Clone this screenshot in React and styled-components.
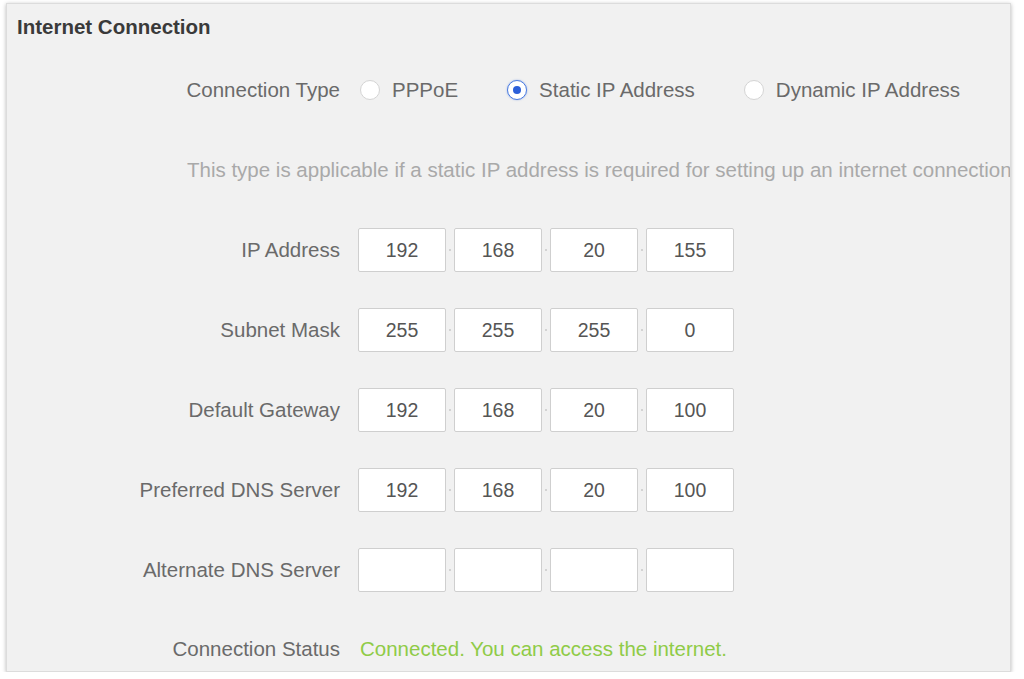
import React from 'react';
import styled, { createGlobalStyle } from 'styled-components';

const GlobalStyle = createGlobalStyle`
  html, body {
    margin: 0;
    padding: 0;
    background: #ffffff;
  }
  body {
    font-family: "Liberation Sans", Arial, sans-serif;
  }
`;

const Panel = styled.div`
  box-sizing: border-box;
  width: 1005px;
  height: 669px;
  margin: 3px 0 0 6px;
  background: #f1f1f1;
  border: 1px solid #dcdcdc;
  box-shadow: 0 1px 4px rgba(0, 0, 0, 0.28);
  overflow: hidden;
  display: flex;
  flex-direction: column;
`;

const Title = styled.div`
  flex-shrink: 0;
  height: 46px;
  display: flex;
  align-items: center;
  padding-left: 10px;
  font-size: 20.5px;
  font-weight: bold;
  color: #3a3a3a;
`;

const Row = styled.div`
  height: ${p => p.h || 80}px;
  flex-shrink: 0;
  display: grid;
  grid-template-columns: 333px auto;
  column-gap: ${p => p.gap ?? 18}px;
  align-items: center;
  white-space: nowrap;
`;

const HintRow = styled.div`
  height: 80px;
  flex-shrink: 0;
  display: flex;
  align-items: center;
  padding-left: 180px;
  white-space: nowrap;
  font-size: 20.5px;
  color: #a9a9a9;
`;

const Label = styled.div`
  text-align: right;
  font-size: 20.5px;
  color: #6a6a6a;
`;

const RadioGroup = styled.div`
  display: flex;
  align-items: center;
  gap: 49px;
`;

const RadioOption = styled.label`
  display: flex;
  align-items: center;
  gap: 12px;
  font-size: 20.5px;
  color: #6a6a6a;
`;

const RadioMark = styled.span`
  box-sizing: border-box;
  width: 20px;
  height: 20px;
  border-radius: 50%;
  background: #fff;
  border: 1px solid ${p => (p.checked ? '#4a7be0' : '#d4d4d4')};
  box-shadow: ${p => (p.checked ? '0 0 2px rgba(60,110,220,0.5)' : 'none')};
  display: flex;
  align-items: center;
  justify-content: center;

  &::after {
    content: '';
    width: 8px;
    height: 8px;
    border-radius: 50%;
    background: #2b5fd9;
    display: ${p => (p.checked ? 'block' : 'none')};
  }
`;

const IpFields = styled.div`
  display: flex;
  align-items: center;
`;

const Octet = styled.div`
  box-sizing: border-box;
  width: 88px;
  height: 44px;
  background: #fff;
  border: 1px solid #cfcfcf;
  border-radius: 2px;
  display: flex;
  align-items: center;
  justify-content: center;
  font-size: 19.5px;
  color: #555;
`;

const Dot = styled.span`
  width: 8px;
  display: flex;
  justify-content: center;

  &::before {
    content: '';
    width: 2px;
    height: 2px;
    border-radius: 1px;
    background: #c8c8c8;
  }
`;

const Status = styled.div`
  font-size: 20.5px;
  color: #8fcb47;
`;

const connectionTypes = [
  { label: 'PPPoE', checked: false },
  { label: 'Static IP Address', checked: true },
  { label: 'Dynamic IP Address', checked: false },
];

const addressRows = [
  { label: 'IP Address', value: ['192', '168', '20', '155'] },
  { label: 'Subnet Mask', value: ['255', '255', '255', '0'] },
  { label: 'Default Gateway', value: ['192', '168', '20', '100'] },
  { label: 'Preferred DNS Server', value: ['192', '168', '20', '100'] },
  { label: 'Alternate DNS Server', value: ['', '', '', ''] },
];

const IpInput = ({ value }) => (
  <IpFields>
    {value.map((part, i) => (
      <React.Fragment key={i}>
        {i > 0 && <Dot />}
        <Octet>{part}</Octet>
      </React.Fragment>
    ))}
  </IpFields>
);

const App = () => (
  <>
    <GlobalStyle />
    <Panel>
      <Title>Internet Connection</Title>

      <Row gap={20}>
        <Label>Connection Type</Label>
        <RadioGroup>
          {connectionTypes.map(t => (
            <RadioOption key={t.label}>
              <RadioMark checked={t.checked} />
              {t.label}
            </RadioOption>
          ))}
        </RadioGroup>
      </Row>

      <HintRow>
        This type is applicable if a static IP address is required for setting up an internet connection
      </HintRow>

      {addressRows.map(r => (
        <Row key={r.label}>
          <Label>{r.label}</Label>
          <IpInput value={r.value} />
        </Row>
      ))}

      <Row h={78} gap={20}>
        <Label>Connection Status</Label>
        <Status>Connected. You can access the internet.</Status>
      </Row>
    </Panel>
  </>
);

export default App;
